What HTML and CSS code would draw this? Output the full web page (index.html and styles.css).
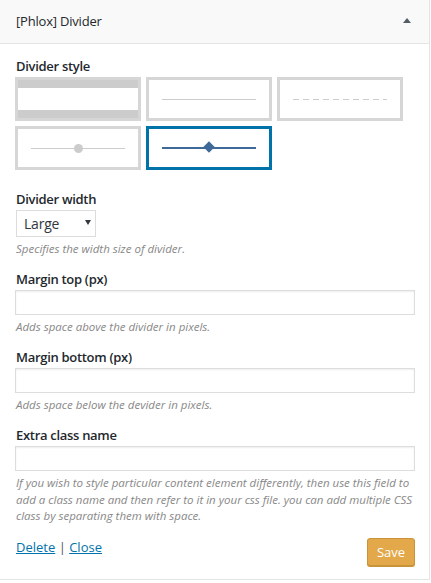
FILE: index.html
```html
<!DOCTYPE html>
<html>
<head>
<meta charset="utf-8">
<link rel="stylesheet" href="styles.css">
</head>
<body>
<div class="panel">
  <div class="header">
    <span class="title">[Phlox] Divider</span>
    <span class="toggle"></span>
  </div>
  <div class="content">
    <div class="field style-field">
      <div class="label">Divider style</div>
      <div class="styles">
        <div class="opt"><div class="p-bars"></div></div>
        <div class="opt"><div class="p-line"></div></div>
        <div class="opt"><div class="p-dash"></div></div>
        <div class="opt"><div class="p-line p-dot"></div></div>
        <div class="opt sel"><div class="p-line p-diamond"></div></div>
      </div>
    </div>
    <div class="field">
      <div class="label">Divider width</div>
      <div class="select"><span>Large</span><span class="caret"></span></div>
      <div class="desc">Specifies the width size of divider.</div>
    </div>
    <div class="field">
      <div class="label">Margin top (px)</div>
      <div class="input"></div>
      <div class="desc">Adds space above the divider in pixels.</div>
    </div>
    <div class="field">
      <div class="label">Margin bottom (px)</div>
      <div class="input"></div>
      <div class="desc">Adds space below the devider in pixels.</div>
    </div>
    <div class="field">
      <div class="label">Extra class name</div>
      <div class="input"></div>
      <div class="desc long">If you wish to style particular content element differently, then use this field to add a class name and then refer to it in your css file. you can add multiple CSS class by separating them with space.</div>
    </div>
    <div class="footer">
      <div class="links"><a href="#">Delete</a> | <a href="#">Close</a></div>
      <button class="save">Save</button>
    </div>
  </div>
</div>
</body>
</html>
```
FILE: styles.css
```css
* { box-sizing: border-box; }
html, body { margin: 0; padding: 0; background: #fff; }
body {
  font-family: "Open Sans", "Noto Sans", sans-serif;
  font-size: 13px;
  color: #23282d;
}
.panel {
  width: 430px;
  border-right: 1px solid #e5e5e5;
  border-bottom: 1px solid #e5e5e5;
}
.header {
  height: 44px;
  background: #f9f9f9;
  border-bottom: 1px solid #e5e5e5;
  display: flex;
  align-items: center;
  justify-content: space-between;
  padding: 0 18px 1px 16px;
}
.title { font-size: 13px; letter-spacing: -0.2px; color: #23282d; }
.toggle {
  width: 0; height: 0;
  border-left: 4px solid transparent;
  border-right: 4px solid transparent;
  border-bottom: 5px solid #555d66;
  margin-top: -2px;
}
.content { padding: 13px 14px 13px 15px; }
.field { margin-bottom: 13px; }
.field.style-field { margin-bottom: 20px; }
.label {
  font-weight: 600;
  line-height: 18px;
  margin-bottom: 2px;
  padding-left: 1px;
  letter-spacing: -0.3px;
}
.styles {
  display: grid;
  grid-template-columns: repeat(3, 126px);
  grid-auto-rows: 44px;
  gap: 5px;
}
.opt {
  border: 3px solid #d6d6d6;
  display: flex;
  align-items: center;
  justify-content: center;
  position: relative;
}
.opt.sel { border-color: #0073aa; }
.p-bars {
  align-self: stretch;
  width: 100%;
  border-top: 8px solid #cccccc;
  border-bottom: 8px solid #cccccc;
}
.p-line {
  width: 94px;
  height: 1px;
  background: #cccccc;
  position: relative;
}
.p-dash {
  width: 94px;
  height: 1px;
  background: repeating-linear-gradient(90deg, #cccccc 0 6px, transparent 6px 10px);
}
.p-dot::after {
  content: "";
  position: absolute;
  left: 43px;
  top: -4px;
  width: 9px;
  height: 9px;
  border-radius: 50%;
  background: #cccccc;
}
.p-diamond { background: #3d6a99; height: 1.5px; }
.p-diamond::after {
  content: "";
  position: absolute;
  left: 43px;
  top: -4px;
  width: 8px;
  height: 8px;
  background: #3d6a99;
  transform: rotate(45deg);
}
.select {
  width: 80px;
  height: 27px;
  margin-left: 1px;
  margin-top: 1px;
  border: 1px solid #dddddd;
  display: flex;
  align-items: center;
  justify-content: space-between;
  padding: 0 4px 0 7px;
  font-size: 14px;
  color: #32373c;
  letter-spacing: -0.2px;
}
.caret {
  width: 0; height: 0;
  border-left: 3px solid transparent;
  border-right: 3px solid transparent;
  border-top: 5px solid #32373c;
  margin-top: -2px;
}
.input {
  width: 400px;
  height: 25px;
  border: 1px solid #dddddd;
  box-shadow: inset 0 1px 2px rgba(0,0,0,0.07);
}
.desc {
  margin-top: 4px;
  font-style: italic;
  font-size: 11.5px;
  line-height: 16px;
  color: #888;
  padding-left: 1px;
}
.desc.long { line-height: 16.5px; }
.footer {
  display: flex;
  justify-content: space-between;
  align-items: flex-start;
}
.links { line-height: 18px; padding-left: 1px; color: #555; }
.links a { color: #0073aa; text-decoration: underline; }
.save {
  height: 28px;
  width: 48px;
  padding: 0;
  font-family: inherit;
  font-size: 13px;
  color: #fff;
  background: #e2a84a;
  border: 1px solid #c9933a;
  border-radius: 3px;
  box-shadow: 0 1px 0 #c9933a;
}
```
